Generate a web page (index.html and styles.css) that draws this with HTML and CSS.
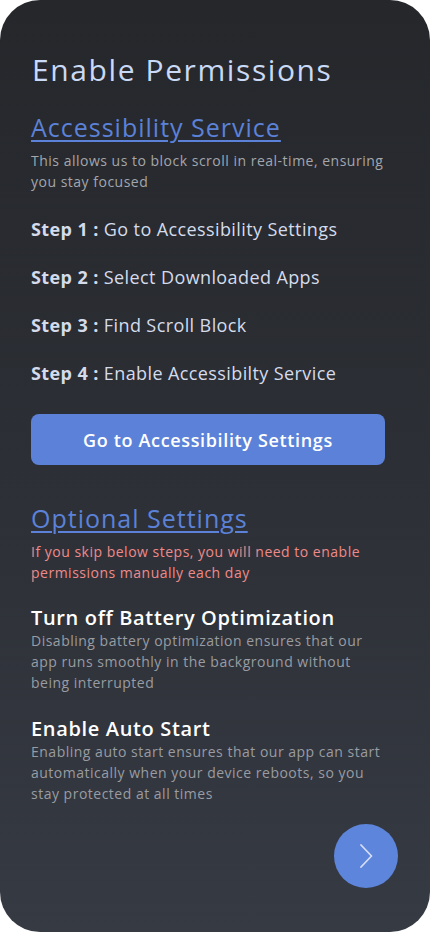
FILE: index.html
```html
<!DOCTYPE html>
<html lang="en">
<head>
<meta charset="utf-8">
<title>Enable Permissions</title>
<link rel="stylesheet" href="styles.css">
</head>
<body>
<main class="screen">
  <h1 class="title">Enable Permissions</h1>

  <section class="block">
    <h2 class="section-link">Accessibility Service</h2>
    <p class="desc">This allows us to block scroll in real-time, ensuring you stay focused</p>
  </section>

  <ol class="steps">
    <li><b>Step 1 :</b> Go to Accessibility Settings</li>
    <li><b>Step 2 :</b> Select Downloaded Apps</li>
    <li><b>Step 3 :</b> Find Scroll Block</li>
    <li><b>Step 4 :</b> Enable Accessibilty Service</li>
  </ol>

  <button class="primary">Go to Accessibility Settings</button>

  <section class="block optional">
    <h2 class="section-link">Optional Settings</h2>
    <p class="desc warn">If you skip below steps, you will need to enable permissions manually each day</p>
  </section>

  <section class="item">
    <h3 class="item-title">Turn off Battery Optimization</h3>
    <p class="desc">Disabling battery optimization ensures that our<br>app runs smoothly in the background without<br>being interrupted</p>
  </section>

  <section class="item">
    <h3 class="item-title">Enable Auto Start</h3>
    <p class="desc">Enabling auto start ensures that our app can start<br>automatically when your device reboots, so you<br>stay protected at all times</p>
  </section>

  <div class="footer">
    <button class="next" aria-label="Next">
      <svg width="20" height="28" viewBox="0 0 20 28" fill="none"><path d="M5 3 L15.5 14 L5 25" stroke="#d3def6" stroke-width="1.8" stroke-linecap="round" stroke-linejoin="round"/></svg>
    </button>
  </div>
</main>
</body>
</html>
```
FILE: styles.css
```css
* { box-sizing: border-box; margin: 0; padding: 0; }
html, body { background: #ffffff; }
body { width: 430px; height: 932px; overflow: hidden; }

.screen {
  width: 430px;
  height: 932px;
  border-radius: 40px;
  background: linear-gradient(180deg, #25272b 0%, #2c2f35 50%, #363a43 100%);
  padding: 52px 30px 0 31px;
  display: flex;
  flex-direction: column;
  font-family: "Open Sans", sans-serif;
}

.title {
  font-weight: 500;
  font-size: 30px;
  line-height: 36px;
  letter-spacing: 1.6px;
  color: #c9d9f6;
  margin-left: 1px;
}

.block { margin-top: 24px; }

.section-link {
  font-weight: 500;
  font-size: 25px;
  line-height: 30px;
  letter-spacing: 1px;
  color: #5b82d8;
  text-decoration: underline;
  text-decoration-thickness: 1.5px;
  text-underline-offset: 3px;
}

.desc {
  font-size: 14px;
  line-height: 21px;
  letter-spacing: 0.5px;
  color: #a3a6ac;
  margin-top: 8px;
}

.steps {
  list-style: none;
  margin-top: 25px;
  display: flex;
  flex-direction: column;
  gap: 24px;
}
.steps li {
  font-size: 18px;
  line-height: 24px;
  letter-spacing: 0.4px;
  color: #d4dbeb;
}
.steps b { font-weight: 700; }

.primary {
  margin-top: 29px;
  height: 51px;
  width: 354px;
  border: none;
  border-radius: 8px;
  background: #5b82d8;
  color: #ffffff;
  font-family: "Open Sans", sans-serif;
  font-weight: 600;
  font-size: 18px;
  letter-spacing: 0.65px;
}

.optional { margin-top: 38px; }
.desc.warn { color: #ef8a8a; }

.item { margin-top: 23px; }
.item + .item { margin-top: 24px; }
.item-title {
  font-weight: 600;
  font-size: 20px;
  line-height: 24px;
  letter-spacing: 0.65px;
  color: #ffffff;
}
.item .desc { margin-top: 0; color: #999ca2; }

.footer {
  margin-top: auto;
  margin-bottom: 44px;
  display: flex;
  justify-content: flex-end;
}
.next {
  width: 64px;
  height: 64px;
  border-radius: 50%;
  border: none;
  background: #5d85db;
  display: flex;
  align-items: center;
  justify-content: center;
  margin-right: 2px;
}
```
